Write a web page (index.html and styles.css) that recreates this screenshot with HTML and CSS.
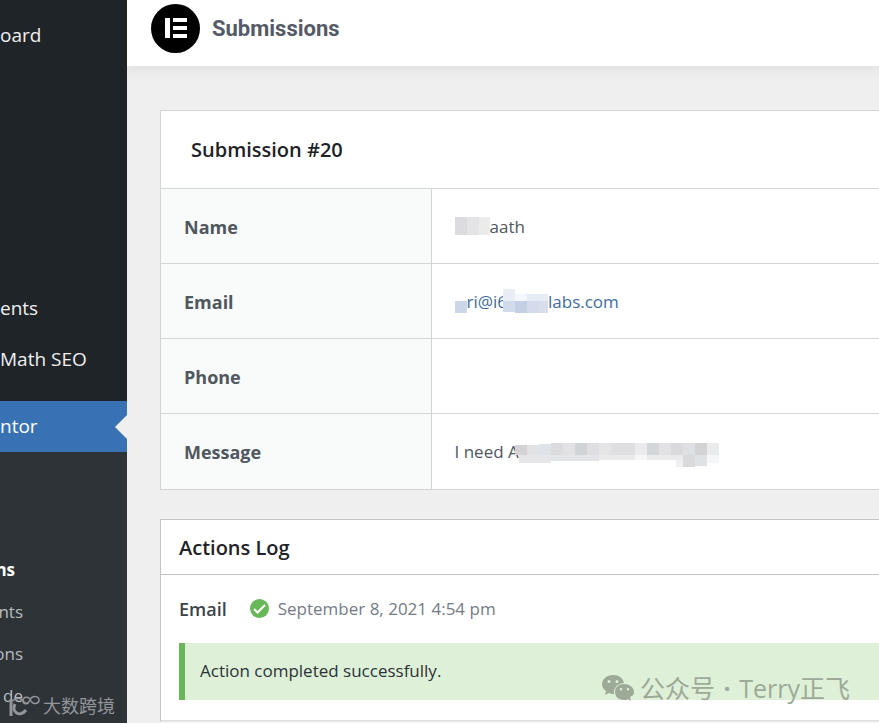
FILE: index.html
```html
<!DOCTYPE html>
<html lang="en">
<head>
    <meta charset="UTF-8">
    <meta name="viewport" content="width=device-width, initial-scale=1.0">
    <title>Submissions</title>
    <link rel="stylesheet" href="styles.css">
</head>
<body>
    <!-- Admin Menu -->
    <nav class="sidebar">
        <a href="#" class="menu-item dashboard">oard</a>
        <a href="#" class="menu-item">ents</a>
        <a href="#" class="menu-item">Math SEO</a>
        <a href="#" class="menu-item active">ntor</a>
        <div class="submenu">
            <a href="#" class="current">ns</a>
            <a href="#">nts</a>
            <a href="#">ons</a>
            <a href="#">de</a>
        </div>
        <div class="brand-mark">
            <svg width="32" height="22" viewBox="0 0 32 22" fill="none" stroke="currentColor">
                <path d="M3 4v17" stroke-width="3"/>
                <path d="M7 9c-4 8 5 14 11 6" stroke-width="3"/>
                <path d="M4 6c4-3 8-4 11 0 2 3 5 3 7-1 2-5 9-4 9 0s-6 5-8 1c-2-5-8-5-8 0 0 3 4 4 6 1" stroke-width="1.5"/>
            </svg>
            <span>大数跨境</span>
        </div>
    </nav>

    <div class="page">
        <header class="topbar">
            <svg class="logo" width="49" height="49" viewBox="0 0 49 49">
                <circle cx="24.500" cy="24.500" r="24.500" fill="#000"/>
                <path d="M14 14h5v20h-5zM22 14h14v4H22zM22 22h14v4H22zM22 30h14v4H22z" fill="#fff"/>
            </svg>
            <h1>Submissions</h1>
        </header>

        <main>
            <!-- Submission Details -->
            <section class="card details">
                <h2>Submission #20</h2>
                <table>
                    <tr>
                        <th scope="row">Name</th>
                        <td><div class="value">
                            <svg class="mask" width="35" height="18" shape-rendering="crispEdges">
                                <path d="M0 0h12v18H0z" fill="#dcdcde"/><path d="M12 0h12v18H12z" fill="#e4e4e6"/><path d="M24 0h11v18H24z" fill="#ebebeb"/>
                            </svg><span>aath</span>
                        </div></td>
                    </tr>
                    <tr>
                        <th scope="row">Email</th>
                        <td><a href="#" class="value">
                            <svg class="mask" width="12" height="24" shape-rendering="crispEdges">
                                <path d="M0 12h12v12H0z" fill="#cbd6e8"/>
                            </svg><span>ri@i6</span>
                            <svg class="mask over-email" width="45" height="24" shape-rendering="crispEdges">
                                <path d="M0 0h12v12H0z" fill="#e9eef5"/><path d="M12 5h12v7H12z" fill="#f3f6fa"/><path d="M24 5h21v7H24z" fill="#e6ecf5"/>
                                <path d="M0 12h12v11H0z" fill="#d1dbec"/><path d="M12 12h12v12H12z" fill="#c4cfe3"/><path d="M24 12h12v12H24z" fill="#d4dcec"/><path d="M36 12h9v12h-9z" fill="#d8dfea"/>
                            </svg><span>labs.com</span>
                        </a></td>
                    </tr>
                    <tr>
                        <th scope="row">Phone</th>
                        <td></td>
                    </tr>
                    <tr>
                        <th scope="row">Message</th>
                        <td><div class="value">
                            <span>I need A</span>
                            <svg class="mask over" width="204" height="24" shape-rendering="crispEdges">
                                <path d="M0 2h12v10H0z" fill="#d3d3d5"/><path d="M12 2h12v10H12z" fill="#e2e2e4"/><path d="M24 1h12v11H24z" fill="#dfe2e8"/><path d="M36 0h12v12H36z" fill="#dcdcde"/><path d="M48 0h12v12H48z" fill="#e2e2e4"/><path d="M60 0h12v12H60z" fill="#d2d3d7"/><path d="M72 0h12v12H72z" fill="#dfdfe1"/><path d="M84 0h12v12H84z" fill="#e5e5e5"/><path d="M96 0h24v12H96z" fill="#dfdfe1"/><path d="M120 0h12v12h-12z" fill="#ebebed"/><path d="M132 0h12v12h-12z" fill="#d5d6da"/><path d="M144 0h12v12h-12z" fill="#e2e2e4"/><path d="M156 0h12v12h-12z" fill="#dadadc"/><path d="M168 0h12v12h-12z" fill="#dfe0e4"/><path d="M180 0h12v12h-12z" fill="#d3d3d3"/><path d="M192 0h12v12h-12z" fill="#eaebed"/>
                                <path d="M4 12h32v8H4z" fill="#e6e6e8"/><path d="M36 12h48v6H36z" fill="#e3e4e8"/><path d="M84 12h36v5H84z" fill="#eaeaec"/><path d="M120 12h12v5h-12z" fill="#f6f6f6"/><path d="M132 12h36v5h-36z" fill="#ebebed"/><path d="M161 17h7v7h-7z" fill="#eff0f2"/><path d="M168 12h12v12h-12z" fill="#dadadc"/><path d="M180 12h12v11h-12z" fill="#dfe1e5"/><path d="M192 12h12v8h-12z" fill="#f5f6f8"/>
                            </svg>
                        </div></td>
                    </tr>
                </table>
            </section>

            <!-- Actions Log -->
            <section class="card log">
                <h2>Actions Log</h2>
                <div class="log-entry">
                    <div class="log-head">
                        <strong>Email</strong>
                        <svg width="19" height="19" viewBox="0 0 19 19">
                            <circle cx="9.500" cy="9.500" r="9.500" fill="#68b759"/>
                            <path d="M4 10l3.500 3.500L15 6" fill="none" stroke="#fff" stroke-width="2"/>
                        </svg>
                        <time>September 8, 2021 4:54 pm</time>
                    </div>
                    <p class="notice">Action completed successfully.</p>
                </div>
            </section>
        </main>
    </div>

    <div class="account-mark">
        <svg width="32" height="26" viewBox="0 0 32 26">
            <path fill="currentColor" fill-rule="evenodd" d="M11 0C5 0 0 4 0 9c0 3 2 6 4 7l-1 4 4-2c2 1 3 1 5 1-1-6 4-11 10-11C21 3 17 0 11 0zM7 5a1.500 1.500 0 1 1 0 3 1.500 1.500 0 0 1 0-3zm8 0a1.500 1.500 0 1 1 0 3 1.500 1.500 0 0 1 0-3z"/>
            <path fill="currentColor" fill-rule="evenodd" d="M22 9c-5 0-9 3-9 8s4 8 9 8c2 0 3 0 4-1l3 2-1-4c3-1 4-3 4-5 0-5-5-8-10-8zm-3 4a1.200 1.200 0 1 1 0 2.400 1.200 1.200 0 0 1 0-2.400zm7 0a1.200 1.200 0 1 1 0 2.400 1.200 1.200 0 0 1 0-2.400z"/>
        </svg>
        <span>公众号 <b>·</b> Terry正飞</span>
    </div>
</body>
</html>
```
FILE: styles.css
```css
* { margin: 0; padding: 0; box-sizing: border-box; }
body {
    display: flex;
    min-height: 100vh;
    overflow: hidden;
    position: relative;
    background: #efefef;
    color: #50575e;
    font-family: 'Open Sans', 'Noto Sans CJK SC', sans-serif;
    font-size: 17px;
    line-height: 24px;
}
a { text-decoration: none; }
svg { display: block; flex: none; }

/* sidebar */
.sidebar { position: relative; width: 127px; flex: none; background: #1f2428; overflow: hidden; }
.menu-item { display: flex; align-items: center; height: 51px; padding-bottom: 1px; color: #f0f0f1; font-size: 19px; white-space: nowrap; }
.menu-item.dashboard { margin: 10px 0 222px; }
.menu-item.active { position: relative; margin-top: 16px; background: #3872b4; color: #fff; }
.menu-item.active::after {
    content: '';
    position: absolute;
    right: 0;
    top: 14px;
    border: 12px solid transparent;
    border-left: 0;
    border-right-color: #efefef;
}
.submenu { min-height: 272px; padding-top: 106px; background: #2e3338; }
.submenu a { display: flex; justify-content: flex-end; width: 23px; margin-bottom: 18px; color: #b9bcbe; }
.submenu .current { padding-right: 8px; color: #fff; font-weight: 700; }
.brand-mark { position: absolute; left: 8px; bottom: 5px; display: flex; align-items: center; gap: 3px; color: #92969a; font-size: 18px; white-space: nowrap; }

/* content */
.page { flex: 1; min-width: 0; }
.topbar { display: flex; align-items: center; gap: 12px; height: 66px; padding: 0 24px 10px; background: #fff; box-shadow: 0 3px 12px rgba(0, 0, 0, 0.08); }
.topbar h1 { padding-top: 1px; color: #555b66; font: 700 22px/28px Roboto, sans-serif; }
main { padding: 44px 0 0 33px; }
.card { border: 1px solid #d3d6d9; border-right: 0; background: #fff; }
.card h2 { color: #1d2327; font-size: 20px; font-weight: 600; }
.details h2 { padding: 1px 30px 0; line-height: 76px; }
table { width: 100%; border-collapse: collapse; table-layout: fixed; }
th, td { height: 75px; padding: 2px 23px 0; border-top: 1px solid #d3d6d9; text-align: left; }
th { width: 270px; border-right: 1px solid #d3d6d9; background: #f9fbfb; font-size: 18px; font-weight: 700; }
.value { display: flex; align-items: center; white-space: nowrap; }
a.value { color: #3e6ba3; }
.mask { margin-bottom: 2px; }
.mask.over-email { margin-left: -4px; }
.mask.over { margin: 6px 0 0 -4px; }

.log { margin-top: 29px; border-color: #c3c4c7; border-bottom: 0; }
.log h2 { padding: 1px 18px 0; border-bottom: 1px solid #c3c4c7; line-height: 53px; }
.log-entry { margin-bottom: 24px; padding: 22px 0 20px 18px; border-bottom: 1px solid #dcdcde; }
.log-head { display: flex; align-items: center; gap: 9px; margin-bottom: 22px; }
.log-head strong { margin-right: 14px; color: #3c434a; font-size: 18px; font-weight: 600; }
.log-head time { color: #757b85; }
.notice { padding: 16px 15px 17px; border-left: 6px solid #68b759; background: #dff0d8; color: #2c3338; }

/* the log runs on below the fold */
body { height: 100vh; }

.account-mark { position: absolute; left: 602px; bottom: 19px; display: flex; align-items: center; gap: 6px; color: #9caa97; font-size: 25px; line-height: 32px; white-space: nowrap; }
.account-mark b { margin: 0 2px; }
```
